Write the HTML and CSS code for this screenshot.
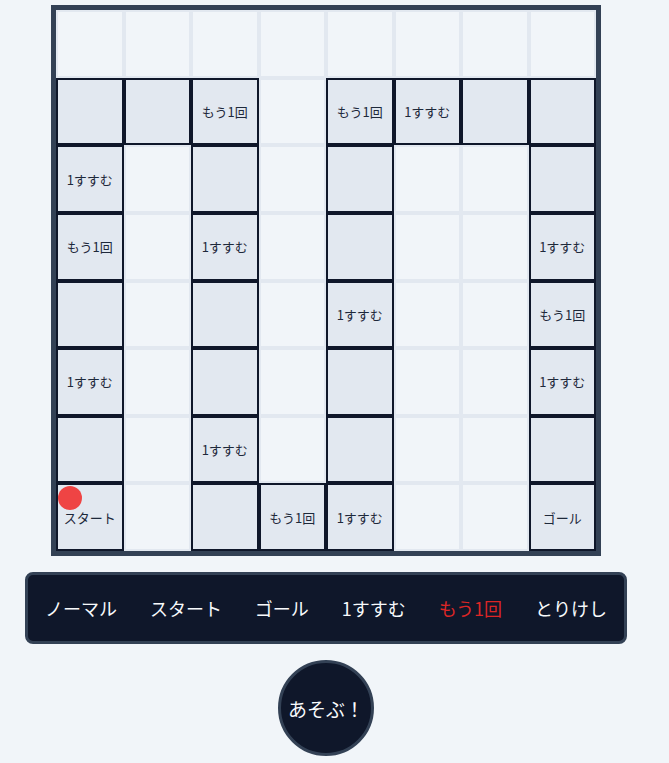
FILE: index.html
```html
<!DOCTYPE html>
<html lang="ja">
<head>
  <meta charset="UTF-8">
  <title>すごろくをつくろう</title>
  <link rel="stylesheet" href="styles.css">
</head>
<body>

  <div class="app">
    <div class="board" id="board"></div>

    <div class="palette">
      <button class="tool">ノーマル</button>
      <button class="tool">スタート</button>
      <button class="tool">ゴール</button>
      <button class="tool">1すすむ</button>
      <button class="tool active">もう1回</button>
      <button class="tool">とりけし</button>
    </div>

    <button class="play">あそぶ！</button>
  </div>

  <script>
    // マスのならび（. = なにもない、N = ノーマル、ほかは文字）
    const layout = [
      ['.', '.', '.', '.', '.', '.', '.', '.'],
      ['N', 'N', 'もう1回', '.', 'もう1回', '1すすむ', 'N', 'N'],
      ['1すすむ', '.', 'N', '.', 'N', '.', '.', 'N'],
      ['もう1回', '.', '1すすむ', '.', 'N', '.', '.', '1すすむ'],
      ['N', '.', 'N', '.', '1すすむ', '.', '.', 'もう1回'],
      ['1すすむ', '.', 'N', '.', 'N', '.', '.', '1すすむ'],
      ['N', '.', '1すすむ', '.', 'N', '.', '.', 'N'],
      ['スタート', '.', 'N', 'もう1回', '1すすむ', '.', '.', 'ゴール']
    ];

    const board = document.getElementById('board');

    layout.forEach(row => {
      row.forEach(type => {
        let cell = document.createElement('div');
        cell.classList.add('cell');
        if (type !== '.') {
          cell.classList.add('path');
          if (type !== 'N') cell.innerText = type;
        }
        if (type === 'スタート') {
          let piece = document.createElement('span');
          piece.classList.add('piece');
          cell.appendChild(piece);
        }
        board.appendChild(cell);
      });
    });
  </script>

</body>
</html>
```

FILE: styles.css
```css
* {
  margin: 0;
  padding: 0;
  box-sizing: border-box;
}

html, body {
  font-family: 'Noto Sans CJK JP', 'Noto Sans', sans-serif;
  background-color: #f1f5f9;
}

.app {
  width: 652px;
  padding-top: 5px;
  display: flex;
  flex-direction: column;
  align-items: center;
}

.board {
  width: 550px;
  height: 551px;
  border: 5px solid #334155;
  background-color: #f1f5f9;
  display: grid;
  grid-template-columns: repeat(8, 1fr);
  grid-template-rows: repeat(8, 1fr);
}

.cell {
  position: relative;
  border: 2px solid #e2e8f0;
  background-color: #f1f5f9;
  display: flex;
  align-items: center;
  justify-content: center;
  font-size: 13px;
  color: #1e293b;
}

.cell.path {
  border-color: #0f172a;
  background-color: #e2e8f0;
}

.piece {
  position: absolute;
  top: 1px;
  left: 0;
  width: 24px;
  height: 24px;
  border-radius: 50%;
  background-color: #ef4444;
}

.palette {
  width: 602px;
  height: 72px;
  margin-top: 16px;
  padding: 0 17px;
  background-color: #0f172a;
  border: 3px solid #334155;
  border-radius: 8px;
  display: flex;
  align-items: center;
  justify-content: space-between;
}

.tool {
  background: none;
  border: none;
  font-family: inherit;
  font-size: 18px;
  color: #f8fafc;
  cursor: pointer;
}

.tool.active {
  color: #dc2626;
}

.play {
  width: 96px;
  height: 96px;
  margin-top: 16px;
  border-radius: 50%;
  border: 3px solid #334155;
  background-color: #0f172a;
  color: #f8fafc;
  font-family: inherit;
  font-size: 19px;
  cursor: pointer;
}
```
